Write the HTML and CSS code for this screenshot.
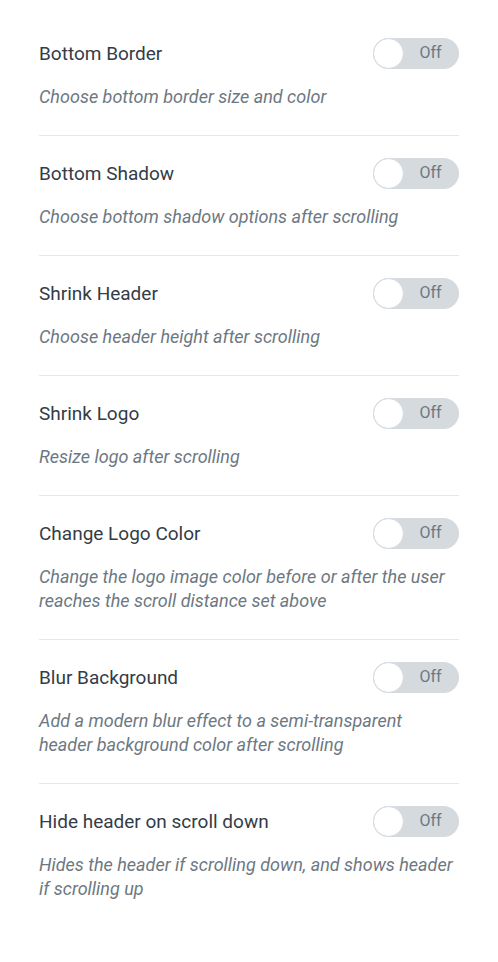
FILE: index.html
```html
<!DOCTYPE html>
<html lang="en">
<head>
    <meta charset="UTF-8">
    <meta name="viewport" content="width=device-width, initial-scale=1.0">
    <title>Sticky Header Options</title>
    <link rel="stylesheet" href="styles.css">
</head>
<body>
    <div class="panel">
        <div class="option">
            <div class="option-row">
                <span class="option-title">Bottom Border</span>
                <label class="switch"><span class="knob"></span><span class="switch-label">Off</span></label>
            </div>
            <p class="option-desc">Choose bottom border size and color</p>
        </div>
        <div class="option">
            <div class="option-row">
                <span class="option-title">Bottom Shadow</span>
                <label class="switch"><span class="knob"></span><span class="switch-label">Off</span></label>
            </div>
            <p class="option-desc">Choose bottom shadow options after scrolling</p>
        </div>
        <div class="option">
            <div class="option-row">
                <span class="option-title">Shrink Header</span>
                <label class="switch"><span class="knob"></span><span class="switch-label">Off</span></label>
            </div>
            <p class="option-desc">Choose header height after scrolling</p>
        </div>
        <div class="option">
            <div class="option-row">
                <span class="option-title">Shrink Logo</span>
                <label class="switch"><span class="knob"></span><span class="switch-label">Off</span></label>
            </div>
            <p class="option-desc">Resize logo after scrolling</p>
        </div>
        <div class="option">
            <div class="option-row">
                <span class="option-title">Change Logo Color</span>
                <label class="switch"><span class="knob"></span><span class="switch-label">Off</span></label>
            </div>
            <p class="option-desc">Change the logo image color before or after the user reaches the scroll distance set above</p>
        </div>
        <div class="option">
            <div class="option-row">
                <span class="option-title">Blur Background</span>
                <label class="switch"><span class="knob"></span><span class="switch-label">Off</span></label>
            </div>
            <p class="option-desc">Add a modern blur effect to a semi-transparent header background color after scrolling</p>
        </div>
        <div class="option last">
            <div class="option-row">
                <span class="option-title">Hide header on scroll down</span>
                <label class="switch"><span class="knob"></span><span class="switch-label">Off</span></label>
            </div>
            <p class="option-desc">Hides the header if scrolling down, and shows header if scrolling up</p>
        </div>
    </div>
</body>
</html>
```

FILE: styles.css
```css
body {
    margin: 0;
    padding: 0;
    background-color: #fff;
    font-family: Roboto, "Liberation Sans", sans-serif;
}

.panel {
    padding: 16px 39px 0 39px;
}

.option {
    padding: 22px 0 26px 0;
    border-bottom: 1px solid #e6e9ec;
}

.option.last {
    border-bottom: none;
}

.option-row {
    display: flex;
    justify-content: space-between;
    align-items: center;
    height: 31px;
}

.option-title {
    font-size: 19px;
    color: #333c47;
}

.option-desc {
    margin: 16px 0 0 0;
    font-size: 18px;
    line-height: 24px;
    font-style: italic;
    color: #6d7882;
}

.switch {
    display: flex;
    align-items: center;
    width: 86px;
    height: 31px;
    box-sizing: border-box;
    border-radius: 16px;
    background-color: #d5dadf;
    cursor: pointer;
}

.knob {
    width: 31px;
    height: 31px;
    box-sizing: border-box;
    border-radius: 50%;
    background-color: #fff;
    border: 1px solid #d5dadf;
}

.switch-label {
    flex: 1;
    text-align: center;
    font-size: 16px;
    color: #6d7882;
    padding-bottom: 2px;
    padding-right: 2px;
}
```
